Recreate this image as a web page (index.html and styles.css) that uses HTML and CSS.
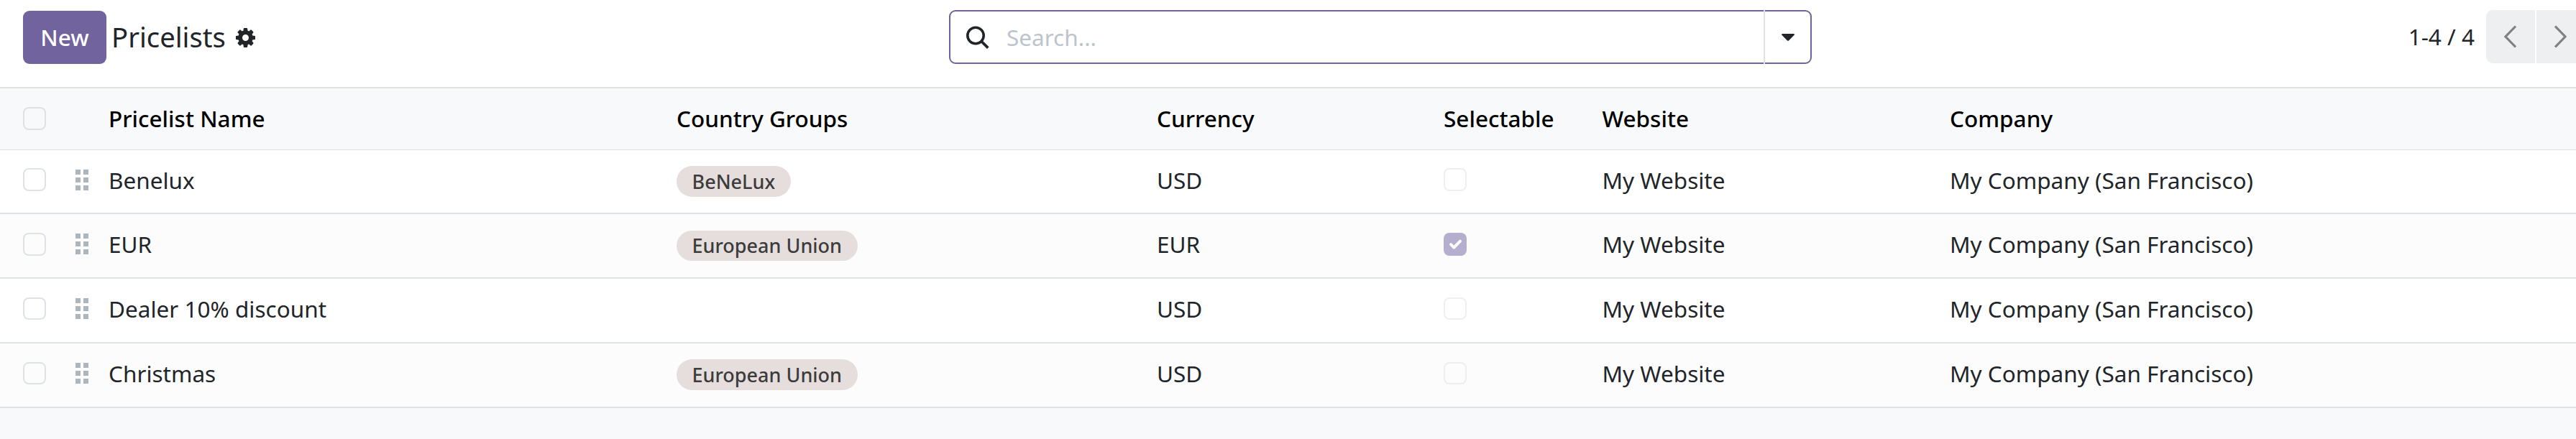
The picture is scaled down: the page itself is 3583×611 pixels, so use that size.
FILE: index.html
```html
<!DOCTYPE html>
<html lang="en">
<head>
<meta charset="utf-8">
<title>Pricelists</title>
<link rel="stylesheet" href="styles.css">
</head>
<body>
<header class="control-panel">
  <div class="breadcrumbs">
    <button class="btn-new" type="button">New</button>
    <h1 class="title">Pricelists</h1>
    <svg class="gear" viewBox="0 128 1536 1536"><path fill="currentColor" d="M1024 896q0-106-75-181t-181-75-181 75-75 181 75 181 181 75 181-75 75-181zm512-109v222q0 12-8 23t-20 13l-185 28q-19 54-39 91 35 50 107 138 10 12 10 25t-9 23q-27 37-99 108t-94 71q-12 0-26-9l-138-108q-44 23-91 38-16 136-29 186-7 28-36 28h-222q-14 0-24.500-8.500t-11.500-21.500l-28-184q-49-16-90-37l-141 107q-10 9-25 9-14 0-25-11-126-114-165-168-7-10-7-23 0-12 8-23 15-21 51-66.500t54-70.500q-27-50-41-99l-183-27q-13-2-21-12.500t-8-23.500v-222q0-12 8-23t19-13l186-28q14-46 39-92-40-57-107-138-10-12-10-24 0-10 9-23 26-36 98.500-107.500t94.500-71.500q13 0 26 10l138 107q44-23 91-38 16-136 29-186 7-28 36-28h222q14 0 24.500 8.500t11.500 21.500l28 184q49 16 90 37l142-107q9-9 24-9 13 0 25 10 129 119 165 170 7 8 7 22 0 12-8 23-15 21-51 66.500t-54 70.500q26 50 41 98l183 28q13 2 21 12.500t8 23.500z"/></svg>
  </div>
  <div class="search">
    <svg class="search-icon" viewBox="0 0 32 32"><circle cx="13" cy="13.500" r="11.200" fill="none" stroke="currentColor" stroke-width="3.600"/><path d="M21 21.500L30.300 30.700" fill="none" stroke="currentColor" stroke-width="3.800"/></svg>
    <span class="placeholder">Search...</span>
    <div class="search-toggle"><svg class="caret" viewBox="0 0 18 10"><path fill="currentColor" d="M1 0H17Q18.500 .6 17.600 1.800L10 9.400Q9 10.300 8 9.400L.4 1.800Q-.5 .6 1 0Z"/></svg></div>
  </div>
  <div class="pager">
    <span class="pager-text">1-4 / 4</span>
    <div class="pager-btn prev"><svg class="chevron" viewBox="0 0 18 32"><path d="M16 1.500L2 16L16 30.500"/></svg></div>
    <div class="pager-btn next"><svg class="chevron" viewBox="0 0 18 32"><path d="M2 1.500L16 16L2 30.500"/></svg></div>
  </div>
</header>
<main class="list">
  <div class="row head">
    <i class="check"></i><span></span><span>Pricelist Name</span><span>Country Groups</span><span>Currency</span><span>Selectable</span><span>Website</span><span>Company</span>
  </div>
  <div class="row first">
    <i class="check"></i><i class="handle"><b></b><b></b><b></b><b></b><b></b><b></b></i>
    <span>Benelux</span><span class="tag">BeNeLux</span><span>USD</span><i class="check disabled"></i><span>My Website</span><span>My Company (San Francisco)</span>
  </div>
  <div class="row odd">
    <i class="check"></i><i class="handle"><b></b><b></b><b></b><b></b><b></b><b></b></i>
    <span>EUR</span><span class="tag low">European Union</span><span>EUR</span><i class="check disabled checked"><svg class="tick" viewBox="0 0 32 32"><path d="M10 16.200L14.300 20.500L23 11.600"/></svg></i><span>My Website</span><span>My Company (San Francisco)</span>
  </div>
  <div class="row short">
    <i class="check"></i><i class="handle"><b></b><b></b><b></b><b></b><b></b><b></b></i>
    <span>Dealer 10% discount</span><span></span><span>USD</span><i class="check disabled"></i><span>My Website</span><span>My Company (San Francisco)</span>
  </div>
  <div class="row odd short">
    <i class="check"></i><i class="handle"><b></b><b></b><b></b><b></b><b></b><b></b></i>
    <span>Christmas</span><span class="tag">European Union</span><span>USD</span><i class="check disabled"></i><span>My Website</span><span>My Company (San Francisco)</span>
  </div>
</main>
</body>
</html>
```
FILE: styles.css
```css
* { box-sizing: border-box; }
body {
  margin: 0;
  height: 611px;
  overflow: hidden;
  background: #f8f9fb;
  color: #212529;
  font: 400 31.5px/43px "Noto Sans", "Open Sans", sans-serif;
}
.control-panel {
  display: grid;
  grid-template-columns: 1320px 1200px 1fr;
  align-items: start;
  height: 123px;
  padding-top: 14px;
  background: #fff;
  border-bottom: 2px solid #dee2e6;
}
.breadcrumbs {
  display: flex;
  align-items: center;
  padding: 1px 0 0 32px;
}
.btn-new {
  width: 116px;
  height: 74px;
  padding: 0 0 2px;
  border: 0;
  border-radius: 9px;
  background: #71639e;
  color: #fff;
  font: inherit;
  font-weight: 500;
}
.title {
  margin: 0 0 0 7px;
  padding-bottom: 2px;
  font-size: 38.25px;
  line-height: 52px;
  font-weight: 400;
}
.gear { width: 27px; height: 27px; margin-left: 14.5px; }
.search {
  display: flex;
  align-items: center;
  height: 75px;
  border: 2px solid #71639e;
  border-radius: 9px;
}
.search-icon { width: 32px; height: 32px; margin-left: 22px; }
.placeholder { flex: 1; margin-left: 24px; color: #bdc4cb; }
.search-toggle {
  display: flex;
  align-items: center;
  justify-content: center;
  width: 65px;
  height: 75px;
  border-left: 2px solid #dee2e6;
}
.caret { width: 18px; height: 10px; }
.pager { display: flex; align-items: center; justify-content: flex-end; height: 74px; }
.pager-text { margin-right: 16px; padding-bottom: 2px; }
.pager-btn { display: flex; align-items: center; height: 74px; background: #eeeff1; }
.prev { width: 68px; padding-left: 25px; border-radius: 9px 0 0 9px; margin-right: 2px; }
.next { width: 55px; padding-left: 24px; }
.chevron { width: 18px; height: 32px; fill: none; stroke: #808080; stroke-width: 3.2; }
.row {
  display: grid;
  grid-template-columns: 73px 46px 790px 668px 399px 220.5px 483.5px 1fr;
  align-items: start;
  height: 90px;
  padding: 20px 0 0 32px;
  background: #fff;
  border-bottom: 2px solid #dee2e6;
  white-space: nowrap;
}
.head {
  height: 86px;
  background: #f8f9fb;
  border-bottom-width: 1px;
  color: #000;
  font-weight: 500;
}
.first { height: 89px; }
.odd { background: #fcfcfc; }
.check {
  display: block;
  width: 32px;
  height: 32px;
  margin-top: 6px;
  border: 2px solid #dee2e6;
  border-radius: 8px;
}
.first .check { margin-top: 5px; }
.short .check { height: 31px; }
.disabled { border-color: #dfdfdf; opacity: .5; }
.checked { border: 0; background: #71639e; }
.tick { display: block; width: 32px; height: 32px; fill: none; stroke: #fff; stroke-width: 4; stroke-linecap: round; stroke-linejoin: round; }
.handle {
  display: grid;
  grid-template-columns: 7px 7px;
  grid-auto-rows: 7px;
  gap: 4px;
  margin-top: 7px;
}
.handle b { background: #adb5bd; }
.tag {
  justify-self: start;
  height: 43px;
  margin-top: 2px;
  padding: 0 21.5px;
  border-radius: 22px;
  background: #e6dedd;
  color: #3c3c3c;
  font-size: 27px;
  font-weight: 500;
}
.low { height: 42px; margin-top: 3px; line-height: 41px; }
```
